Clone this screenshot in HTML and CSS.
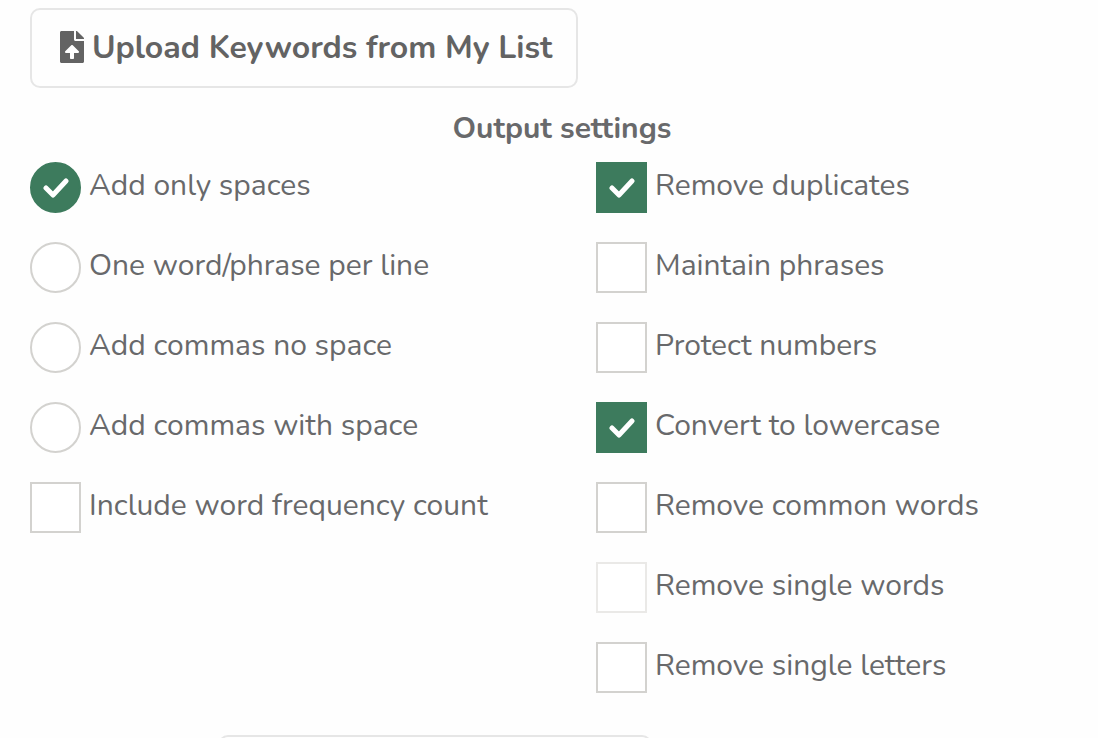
FILE: index.html
```html
<!DOCTYPE html>
<html lang="en">
<head>
    <meta charset="UTF-8">
    <meta name="viewport" content="width=device-width, initial-scale=1.0">
    <title>Output settings</title>
    <link rel="stylesheet" href="styles.css">
</head>
<body>
    <form class="keyword-form">
        <button type="button" class="btn btn-upload">
            <svg class="icon-upload" viewBox="0 0 384 512" aria-hidden="true">
                <path d="M224 136V0H24C10.700 0 0 10.700 0 24v464c0 13.300 10.700 24 24 24h336c13.300 0 24-10.700 24-24V160H248c-13.200 0-24-10.800-24-24zm65 216h-65v80c0 8.800-7.200 16-16 16h-32c-8.800 0-16-7.200-16-16v-80H95c-14.300 0-21.400-17.300-11.300-27.400l96.400-95.700c6.700-6.600 17.400-6.600 24 0l96.400 95.700c10.200 10.100 3 27.400-11.500 27.400zM377 105L279 7c-4.500-4.500-10.600-7-17-7h-6v128h128v-6.100c0-6.300-2.500-12.400-7-16.900z"/>
            </svg>
            Upload Keywords from My List
        </button>

        <h2 class="settings-title">Output settings</h2>

        <div class="settings">
            <!-- Separators -->
            <div class="settings-col">
                <label class="option"><input type="radio" name="separator" value="spaces" checked>Add only spaces</label>
                <label class="option"><input type="radio" name="separator" value="line">One word/phrase per line</label>
                <label class="option"><input type="radio" name="separator" value="commas">Add commas no space</label>
                <label class="option"><input type="radio" name="separator" value="commas-space">Add commas with space</label>
                <label class="option"><input type="checkbox" name="frequency">Include word frequency count</label>
            </div>

            <!-- Filters -->
            <div class="settings-col">
                <label class="option"><input type="checkbox" name="duplicates" checked>Remove duplicates</label>
                <label class="option"><input type="checkbox" name="phrases">Maintain phrases</label>
                <label class="option"><input type="checkbox" name="numbers">Protect numbers</label>
                <label class="option"><input type="checkbox" name="lowercase" checked>Convert to lowercase</label>
                <label class="option"><input type="checkbox" name="common">Remove common words</label>
                <label class="option"><input type="checkbox" name="single-words" disabled>Remove single words</label>
                <label class="option"><input type="checkbox" name="single-letters">Remove single letters</label>
            </div>
        </div>

        <button type="submit" class="btn btn-submit"></button>
    </form>
</body>
</html>
```

FILE: styles.css
```css
* {
    box-sizing: border-box;
}
body {
    height: 100vh;
    margin: 0;
    overflow: hidden;
    background-color: #fefefe;
    color: #68696b;
    font-family: Nunito, Lato, sans-serif;
    font-size: 30px;
}
.keyword-form {
    padding: 8px 4px 0 30px;
}
.btn {
    display: flex;
    align-items: center;
    height: 80px;
    border: 2px solid #e6e6e6;
    border-radius: 10px;
    background-color: #fefefe;
    color: #636363;
    font-family: inherit;
    font-size: 32px;
    font-weight: bold;
    cursor: pointer;
}
.btn-upload {
    gap: 8px;
    padding: 0 24px 2px 28px;
}
.icon-upload {
    width: 24px;
    height: 32px;
    fill: currentColor;
}
.settings-title {
    margin: 21px 0 13px;
    font-size: 30px;
    line-height: 40px;
    text-align: center;
}
.settings {
    display: grid;
    grid-template-columns: 1fr 1fr;
    column-gap: 68px;
}
.settings-col {
    display: flex;
    flex-direction: column;
    gap: 29px;
}
.option {
    display: flex;
    gap: 8px;
    line-height: 48px;
    white-space: nowrap;
}
.option input {
    flex: none;
    width: 51px;
    height: 51px;
    margin: 0;
    border: 2px solid #d3d2cf;
    background-color: #fff;
    appearance: none;
}
.option input[type="radio"] {
    border-radius: 50%;
}
.option input:checked {
    border-color: #3d7b5d;
    background: #3d7b5d url("data:image/svg+xml,%3Csvg xmlns='http://www.w3.org/2000/svg' viewBox='0 0 26 20'%3E%3Cpath d='M3 10l7 7L23 3' fill='none' stroke='%23fff' stroke-width='5' stroke-linecap='round' stroke-linejoin='round'/%3E%3C/svg%3E") center / 26px 20px no-repeat;
}
.option input:disabled {
    border-color: #eae9e7;
}
.btn-submit {
    width: 434px;
    margin: 42px 0 0 188px;
}
```
